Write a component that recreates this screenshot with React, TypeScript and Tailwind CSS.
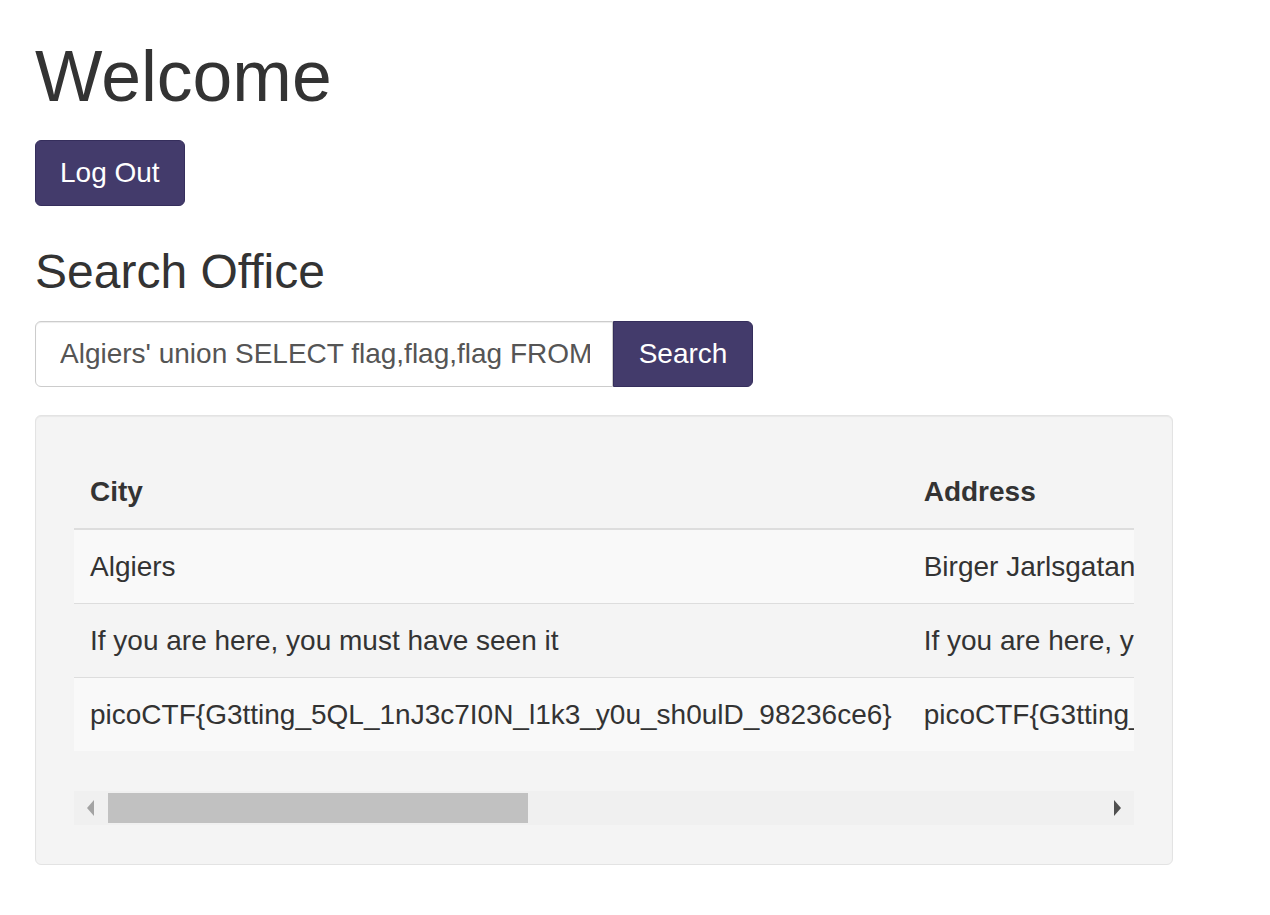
import React from 'react';

const flag = 'picoCTF{G3tting_5QL_1nJ3c7I0N_l1k3_y0u_sh0ulD_98236ce6}';

const rows = [
  ['Algiers', 'Birger Jarlsgatan 7', '+213 123 456 789'],
  ['If you are here, you must have seen it', 'If you are here, you must have seen it', 'If you are here, you must have seen it'],
  [flag, flag, flag],
];

const App: React.FC = () => {
  return (
    <div className="min-h-screen bg-white pl-[35px] pt-[38px] text-[#333] font-['Liberation_Sans',Arial,sans-serif]">
      <h1 className="text-[71.5px] leading-[77px] m-0">Welcome</h1>
      <button className="mt-[25px] h-[66px] px-[24px] rounded-[6px] border border-[#352e5c] bg-[#433b6b] text-white text-[28px] leading-[40px]">
        Log Out
      </button>

      <h2 className="mt-[38px] text-[48px] leading-[56px]">Search Office</h2>
      <div className="mt-[21px] flex w-[718px]">
        <input
          readOnly
          value="Algiers' union SELECT flag,flag,flag FROM offices--"
          className="w-[578px] h-[66px] pl-[24px] pr-[22px] border border-[#ccc] rounded-l-[6px] text-[28px] text-[#555] bg-white shadow-[inset_0_1px_1px_rgba(0,0,0,0.075)] outline-none"
        />
        <button className="w-[140px] h-[66px] rounded-r-[6px] border border-[#352e5c] bg-[#433b6b] text-white text-[28px]">
          Search
        </button>
      </div>

      <div className="mt-[28px] w-[1138px] rounded-[6px] border border-[#e3e3e3] bg-[#f4f4f4] px-[38px] pt-[39px] pb-[39px] shadow-[inset_0_1px_1px_rgba(0,0,0,0.05)]">
        <div className="overflow-hidden">
          <table className="border-collapse text-[28px] leading-[40px] whitespace-nowrap text-left">
            <thead>
              <tr>
                <th className="px-[16px] pt-[17px] pb-[16px] font-bold border-b-2 border-[#ddd]">City</th>
                <th className="px-[16px] pt-[17px] pb-[16px] font-bold border-b-2 border-[#ddd]">Address</th>
                <th className="px-[16px] pt-[17px] pb-[16px] font-bold border-b-2 border-[#ddd]">Phone</th>
              </tr>
            </thead>
            <tbody>
              {rows.map((r, i) => (
                <tr key={i} className={i % 2 === 0 ? 'bg-[#f9f9f9]' : ''}>
                  {r.map((c, j) => (
                    <td key={j} className={`px-[16px] py-[16.5px] font-normal ${i > 0 ? 'border-t border-[#ddd]' : ''}`}>
                      {c}
                    </td>
                  ))}
                </tr>
              ))}
            </tbody>
          </table>
        </div>

        <div className="mt-[40px] flex h-[34px] bg-[#f0f0f0]">
          <div className="w-[34px] flex items-center justify-center">
            <svg width="8" height="16" viewBox="0 0 8 16">
              <polygon points="7,0 7,16 0,8" fill="#a3a3a3" />
            </svg>
          </div>
          <div className="w-[420px] my-[2px] bg-[#c1c1c1]" />
          <div className="flex-1" />
          <div className="w-[34px] flex items-center justify-center">
            <svg width="8" height="16" viewBox="0 0 8 16">
              <polygon points="1,0 1,16 8,8" fill="#505050" />
            </svg>
          </div>
        </div>
      </div>
    </div>
  );
};

export default App;
